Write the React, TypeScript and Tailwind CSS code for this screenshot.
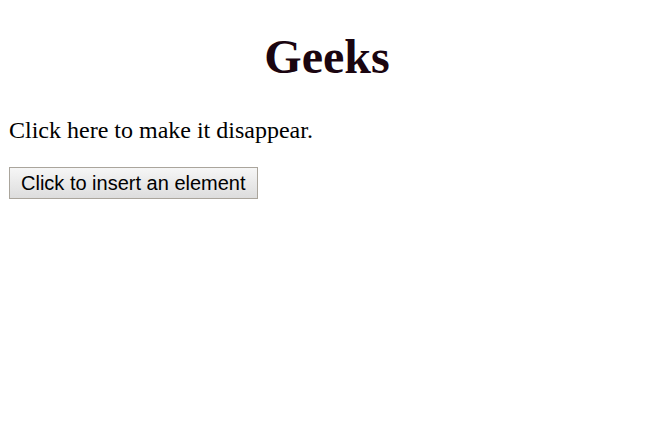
export default function App() {
  return (
    <main className="px-[9px] pt-[29px] bg-white min-h-screen font-['Liberation_Serif',serif] text-black">
      <h1 className="text-center text-[48px] font-bold leading-[55px] text-[#1a0510]">Geeks</h1>
      <p className="mt-[33px] text-[24px] leading-[27px]">Click here to make it disappear.</p>
      <button className="mt-[23px] h-[32px] px-[11px] font-['Liberation_Sans',Arial,sans-serif] text-[20px] leading-none text-black border border-[#aaa59c] bg-gradient-to-b from-[#f6f6f6] to-[#dddddd]">
        Click to insert an element
      </button>
    </main>
  );
}
